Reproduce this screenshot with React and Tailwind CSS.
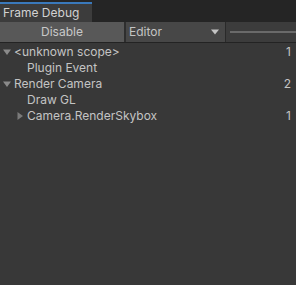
const rows = [
  { label: "<unknown scope>", depth: 0, arrow: "down", count: "1" },
  { label: "Plugin Event", depth: 1 },
  { label: "Render Camera", depth: 0, arrow: "down", count: "2" },
  { label: "Draw GL", depth: 1 },
  { label: "Camera.RenderSkybox", depth: 1, arrow: "right", count: "1" },
];

function Arrow({ dir }) {
  return (
    <svg width="8" height="8" viewBox="0 0 8 8" className="shrink-0">
      {dir === "down" ? (
        <path d="M0 1.5 H8 L4 7 Z" fill="#8a8a8a" />
      ) : (
        <path d="M1.5 0 V8 L7 4 Z" fill="#7a7a7a" />
      )}
    </svg>
  );
}

export default function App() {
  return (
    <div
      className="w-[296px] h-[285px] flex flex-col bg-[#383838] text-[12px] text-[#c4c4c4] overflow-hidden"
      style={{ fontFamily: "Inter, 'Liberation Sans', sans-serif" }}
    >
      {/* tab strip */}
      <div className="h-[22px] bg-[#252525] flex items-end">
        <div className="h-[20px] w-[92px] bg-[#3c3c3c] border-t-2 border-[#3a79bb] flex items-center pl-[3px] text-[#d2d2d2]">
          Frame Debug
        </div>
      </div>

      {/* toolbar */}
      <div className="h-[21px] bg-[#3c3c3c] flex border-b border-[#232323]">
        <div className="w-[126px] bg-[#585858] border-r-2 border-[#2e2e2e] flex items-center justify-center text-[#c8c8c8]">
          Disable
        </div>
        <div className="w-[100px] bg-[#474747] border-r border-[#2a2a2a] flex items-center pl-[3px] pr-[6px]">
          <span className="flex-1">Editor</span>
          <svg width="8" height="6" viewBox="0 0 8 6">
            <path d="M0 0.5 H8 L4 5.5 Z" fill="#c4c4c4" />
          </svg>
        </div>
        <div className="flex-1 flex items-center pl-[4px]">
          <div className="h-[2px] w-full bg-[#6a6a6a]" />
        </div>
      </div>

      {/* tree */}
      <div className="flex flex-col pt-[1px]">
        {rows.map((r, i) => (
          <div key={i} className="h-[16px] flex items-center pr-[5px]">
            <div
              className={
                r.depth === 0
                  ? "w-[14px] pl-[3px] flex items-center"
                  : "w-[27px] pl-[16px] flex items-center"
              }
            >
              {r.arrow && <Arrow dir={r.arrow} />}
            </div>
            <span className="flex-1">{r.label}</span>
            {r.count && <span>{r.count}</span>}
          </div>
        ))}
      </div>
    </div>
  );
}
